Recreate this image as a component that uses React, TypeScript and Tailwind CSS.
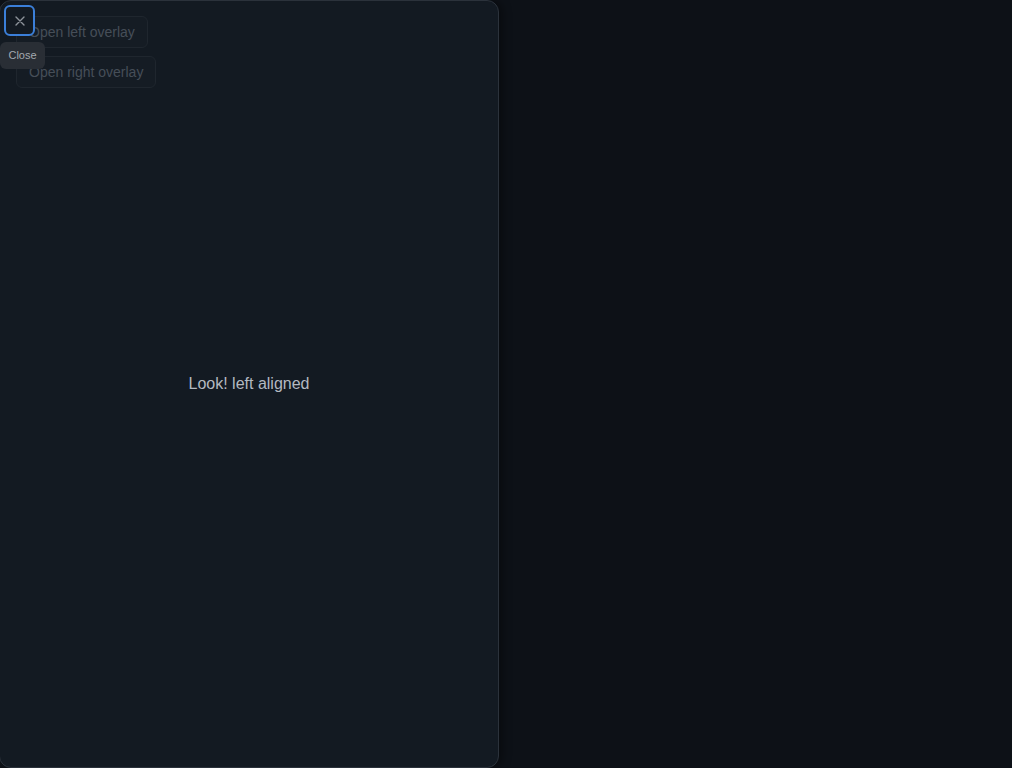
import React from 'react';

export default function App() {
    return (
        <div className="relative min-h-screen w-full overflow-hidden bg-[#0d1117] font-['Liberation_Sans',Arial,sans-serif]">
            {/* page content behind the overlay */}
            <div className="relative z-10 flex flex-col items-start gap-2 p-4">
                <button className="h-8 rounded-md border border-[#1f262e] bg-[#151c24] px-3 text-sm text-[#464e58]">Open left overlay</button>
                <button className="h-8 rounded-md border border-[#1f262e] bg-[#151c24] px-3 text-sm text-[#464e58]">Open right overlay</button>
            </div>

            {/* left drawer */}
            <div className="absolute inset-y-0 left-[-1px] flex w-[500px] items-center justify-center rounded-xl border border-[#2b323b] bg-[#131a22] shadow-[4px_0_8px_rgba(0,0,0,0.35)]">
                <span className="text-base text-[#b3b9c1]">Look! left aligned</span>
            </div>

            {/* close button + tooltip */}
            <button className="absolute left-[4px] top-[5px] z-20 flex h-[31px] w-[31px] items-center justify-center rounded-md border-2 border-[#3b7fd9] bg-[#131a22] text-[#8d939a]">
                <svg width="10" height="10" viewBox="0 0 10 10" fill="none" stroke="currentColor" strokeWidth="1.4" strokeLinecap="round">
                    <path d="M1 1l8 8M9 1l-8 8" />
                </svg>
            </button>
            <div className="absolute left-0 top-[42px] z-20 flex h-[27px] w-[45px] items-center justify-center rounded-md bg-[#292e35] text-[11px] text-[#a3a9b0]">
                Close
            </div>
        </div>
    );
}
